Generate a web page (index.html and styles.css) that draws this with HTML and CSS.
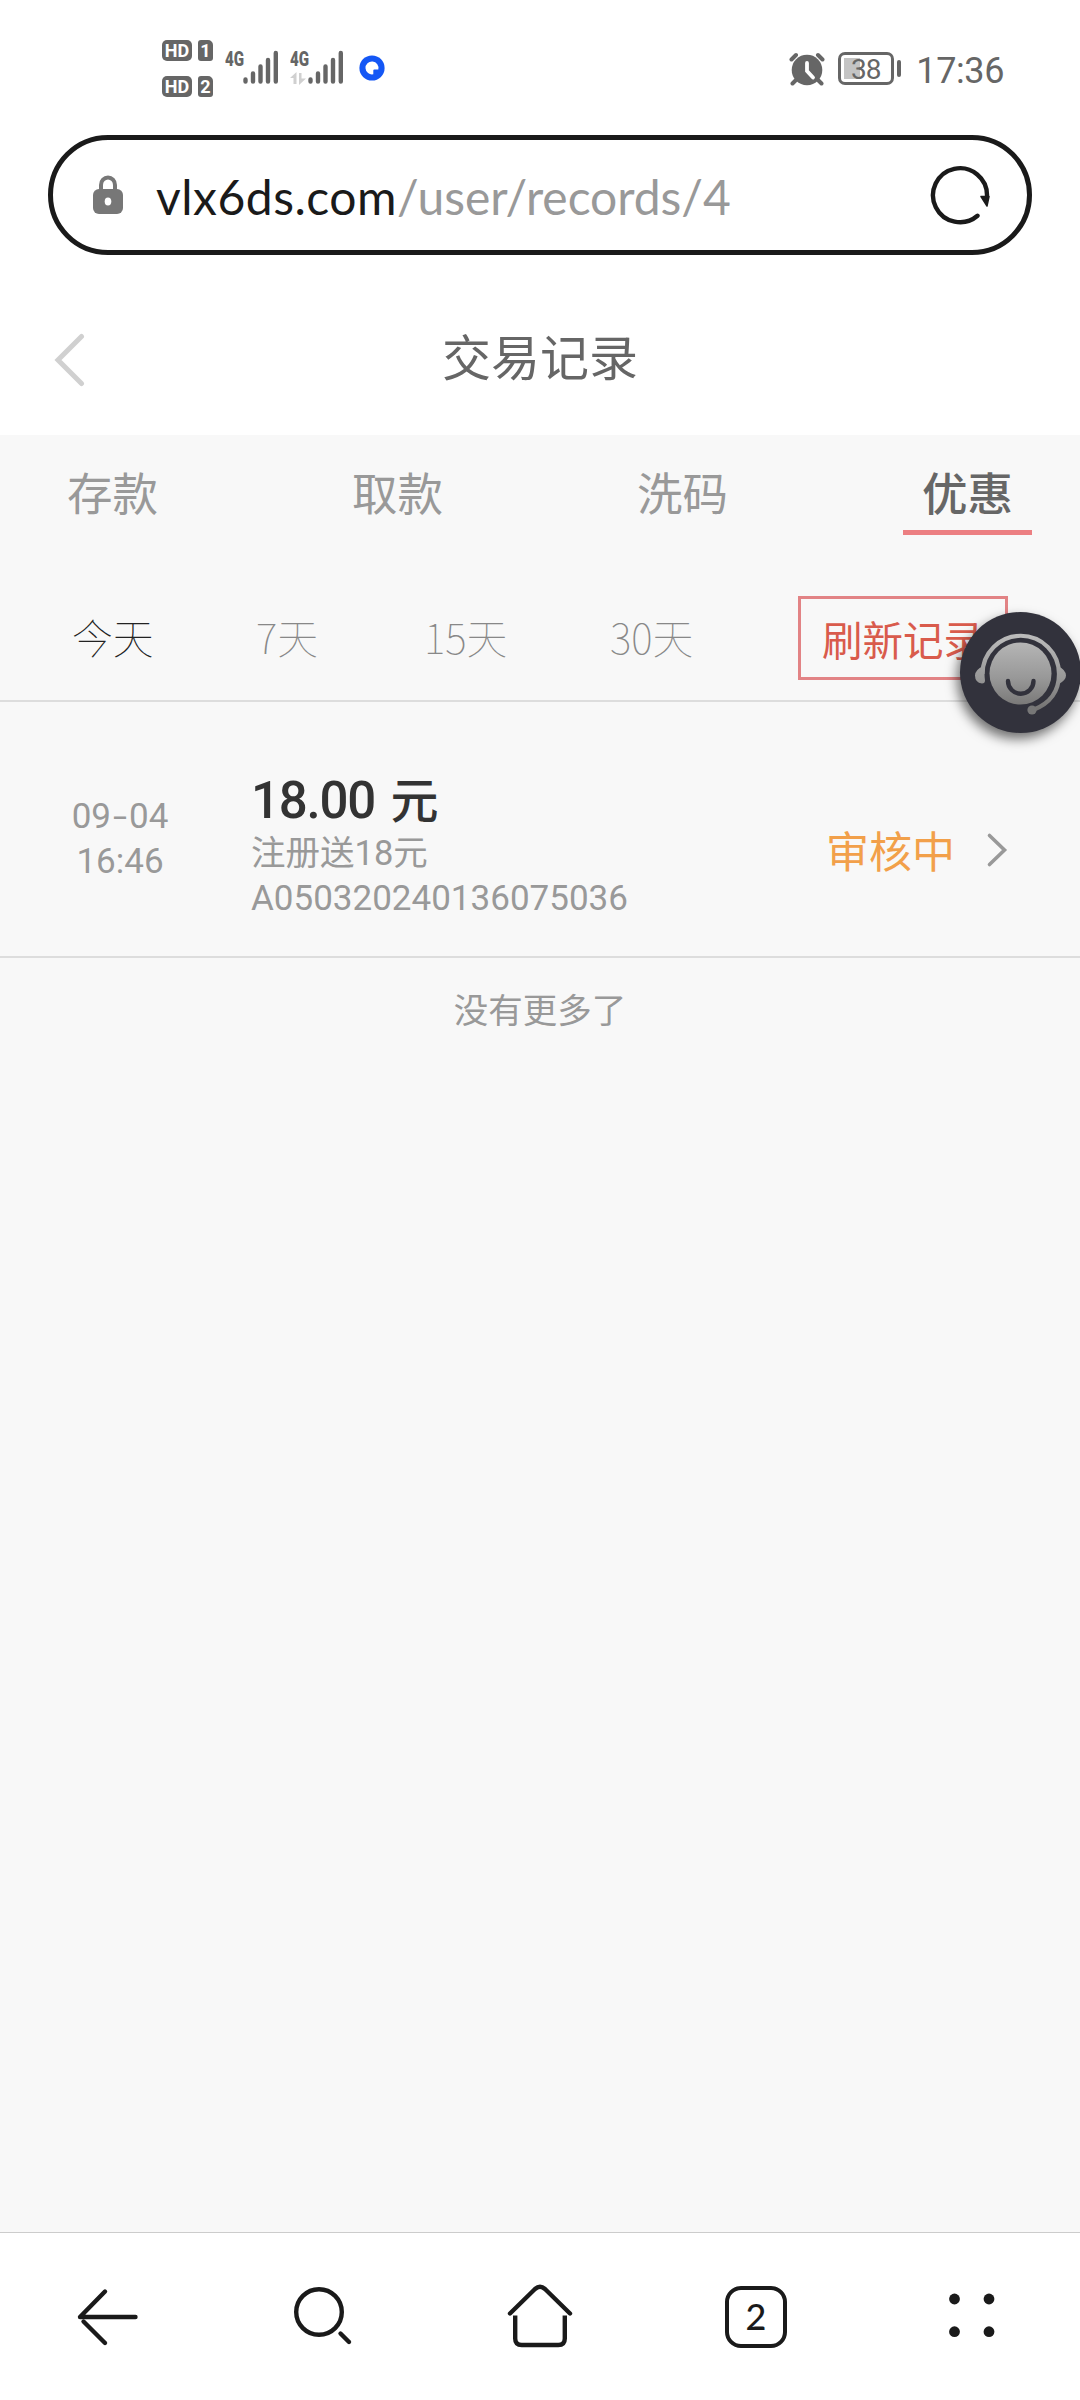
FILE: index.html
```html
<!DOCTYPE html>
<html lang="zh-CN">
<head>
<meta charset="utf-8">
<title>交易记录</title>
<link rel="stylesheet" href="styles.css">
</head>
<body>
<div class="screen">
  <div class="status">
    <div class="status-left">
      <div class="sims">
        <div class="sim"><span class="hd">HD</span><span class="slot">1</span></div>
        <div class="sim"><span class="hd">HD</span><span class="slot">2</span></div>
      </div>
      <div class="net"><span class="gen">4G</span>
        <svg class="bars" width="36" height="34" viewBox="0 0 36 34"><path d="M2.500 29.500v2M10 23.500v8M17.500 16.500v15M25 10v21.500M32.800 3v28.500" stroke="#666" stroke-width="4.400" stroke-linecap="round"/></svg>
      </div>
      <div class="net"><span class="gen">4G</span>
        <svg class="updown" width="16" height="13" viewBox="0 0 16 13"><path d="M6.500 0v12h-3V6H0zM9 1h2.500v5.500H16L9 13z" fill="#d0d0d0"/></svg>
        <svg class="bars" width="36" height="34" viewBox="0 0 36 34"><path d="M2.500 29.500v2M10 23.500v8M17.500 16.500v15M25 10v21.500M32.800 3v28.500" stroke="#666" stroke-width="4.400" stroke-linecap="round"/></svg>
      </div>
      <svg class="ring" width="26" height="26" viewBox="0 0 26 26"><circle cx="13" cy="13" r="12.600" fill="#1457f5"/><path d="M19.300 14.500A6.500 6.500 0 1 0 14.300 19.300V15.500q0-1 1-1z" fill="#fff"/></svg>
    </div>
    <div class="status-right">
      <svg width="36" height="34" viewBox="0 0 36 34"><circle cx="18" cy="18" r="15.300" fill="#666"/><path d="M2.500 7.500 7 3M33.500 7.500 29 3M7 28l-3.500 3.500M29 28l3.500 3.500" stroke="#666" stroke-width="4" stroke-linecap="round"/><path d="M18 11v8l6 6.500" fill="none" stroke="#fff" stroke-width="3.800" stroke-linecap="round"/></svg>
      <div class="battery"><span>38</span></div><i class="cap"></i>
      <span class="clock">17:36</span>
    </div>
  </div>

  <div class="address">
    <svg class="lock" width="30" height="40" viewBox="0 0 30 40"><path d="M8 16V10a7 7.500 0 0 1 14 0v6" fill="none" stroke="#777" stroke-width="4"/><rect y="14" width="30" height="25" rx="6" fill="#777"/><ellipse cx="15" cy="26.500" rx="3.300" ry="4" fill="#fff"/></svg>
    <div class="url"><span class="host">vlx6ds.com</span><span class="path">/user/records/4</span></div>
    <svg class="reload" width="60" height="60" viewBox="0 0 60 60"><path d="M47.500 50.800A27 27 0 1 1 57 31" fill="none" stroke="#1a1a1a" stroke-width="4.400" stroke-linecap="round"/><path d="M51 31.500h8l-2 9.500z" fill="#1a1a1a" stroke="#1a1a1a" stroke-width="1.500" stroke-linejoin="round"/></svg>
  </div>

  <div class="title">
    <svg class="back" width="34" height="54" viewBox="0 0 34 54"><path d="M28.500 3.500 5 27l23.500 23.500" fill="none" stroke="#d0d0d0" stroke-width="5" stroke-linecap="round"/></svg>
    <h1>交易记录</h1>
  </div>

  <main>
    <nav class="tabs"><a>存款</a><a>取款</a><a>洗码</a><a class="on">优惠</a></nav>
    <div class="filters">
      <a class="on">今天</a><a class="d7">7天</a><a class="d15">15天</a><a class="d30">30天</a>
      <button>刷新记录</button>
    </div>
    <section class="record">
      <div class="when">09<span class="dash">-</span>04<br>16:46</div>
      <div class="info"><strong>18.00 <span class="unit">元</span></strong><span>注册送18元</span><span class="serial">A050320240136075036</span></div>
      <div class="state">审核中</div>
      <svg class="go" width="22" height="36" viewBox="0 0 22 36"><path d="M3.500 3.500 18.500 18 3.500 32.500" fill="none" stroke="#999" stroke-width="3.600" stroke-linecap="round"/></svg>
    </section>
    <p class="end">没有更多了</p>
  </main>

  <nav class="bottom">
    <a><svg width="70" height="70" viewBox="0 0 70 70"><path d="M62.500 35H7L32 9.500"/><path d="M32 61 10.500 39.500"/></svg></a>
    <a><svg width="70" height="70" viewBox="0 0 70 70"><circle cx="30" cy="30" r="22.800"/><path d="m51.500 51.500 8.500 8.500"/></svg></a>
    <a><svg width="70" height="70" viewBox="0 0 70 70"><path d="M5 31.500 30 7q5-4.500 10 0L65 31.500"/><path d="M10.200 33.500v23q0 6.500 6.500 6.500h36.600q6.500 0 6.500-6.500v-23" stroke-linecap="butt"/></svg></a>
    <a><b>2</b></a>
    <a><svg width="70" height="70" viewBox="0 0 70 70"><g class="dots"><circle cx="17.500" cy="17" r="5.400"/><circle cx="52" cy="17" r="5.400"/><circle cx="17.500" cy="49.700" r="5.400"/><circle cx="52" cy="49.700" r="5.400"/></g></svg></a>
  </nav>

  <div class="service">
    <svg width="121" height="121" viewBox="0 0 121 121">
      <defs><linearGradient id="metal" gradientUnits="userSpaceOnUse" x1="0" y1="21" x2="0" y2="103"><stop offset="0" stop-color="#bdbdbd"/><stop offset=".55" stop-color="#989898"/><stop offset="1" stop-color="#6e6d6c"/></linearGradient></defs>
      <circle cx="60.500" cy="61.500" r="31" fill="url(#metal)"/>
      <path d="M48 69a12.500 12.500 0 0 0 25.500 0" fill="none" stroke="#32323c" stroke-width="4.400" stroke-linecap="round"/>
      <path d="M22.500 62a38.200 38.200 0 0 1 76.500 0q0 26-26 36" fill="none" stroke="url(#metal)" stroke-width="4.200"/>
      <path d="M23 54q-8 4-8 9.500 0 7 7 8 3 0 3-3-1-7 0-14zM98 54q8 4 8 9.500 0 5-8 9-2-9 0-18.500z" fill="url(#metal)"/>
      <circle cx="72" cy="98" r="4.600" fill="#777"/>
    </svg>
  </div>
</div>
</body>
</html>
```
FILE: styles.css
```css
* { box-sizing: border-box; }
body { margin: 0; background: #fff; font-family: Roboto, "Noto Sans CJK SC", sans-serif; color: #999; }
.screen { position: relative; width: 1080px; height: 2400px; display: flex; flex-direction: column; overflow: hidden; }
svg { display: block; flex: none; }

.status { height: 135px; display: flex; justify-content: space-between; padding: 40px 76px 0 162px; color: #666; }
.status-left { display: flex; align-items: flex-start; }
.sims { display: grid; gap: 15px; margin-right: 12px; }
.sim { display: flex; gap: 6px; }
.hd, .slot { height: 21px; background: #666; color: #fff; font: 700 18px/22px Roboto, sans-serif; text-align: center; border-radius: 5px; }
.hd { width: 30px; }
.slot { width: 15px; border-radius: 3px 5px 3px 3px; }
.net { position: relative; width: 65px; height: 45px; padding: 10px 0 0 18px; }
.gen { position: absolute; left: 0; top: 8px; font: 900 21px/22px Roboto, sans-serif; transform: scaleX(.72); transform-origin: left; }
.updown { position: absolute; left: 0; top: 32px; }
.ring { margin: 15px 0 0 4px; }
.status-right { display: flex; align-items: flex-start; padding-top: 12px; }
.battery { width: 56px; height: 33px; margin-left: 13px; border: 3px solid #666; border-radius: 7px; padding: 3px 3px 3px 2px; background: linear-gradient(#c4c4c4, #c4c4c4) 3px 3px / 16px 21px no-repeat; font-size: 28px; line-height: 23px; font-weight: 400; text-align: center; letter-spacing: -1px; }
.cap { width: 4px; height: 17px; margin: 8px 15px 0 3px; border-radius: 2px; background: #666; }
.clock { font-size: 36px; line-height: 38px; letter-spacing: -.4px; }

.address { height: 120px; margin: 0 48px; border: 5px solid #1a1a1a; border-radius: 60px; display: flex; align-items: center; padding: 0 37px 0 40px; }
.url { flex: 1; margin: 3px 0 0 33px; font: 48px/60px Lato, sans-serif; letter-spacing: .5px; white-space: nowrap; }
.host { color: #1a1a1a; }
.path { letter-spacing: -.05px; }

.title { height: 180px; padding: 0 52px 0 53px; display: flex; align-items: center; }
.title h1 { flex: 1; margin: 20px 35px 0 0; text-align: center; font: 400 49px/60px "Noto Sans CJK SC", sans-serif; color: #666; }
.back { margin-top: 29px; }

main { flex: 1; background: #f8f8f8; }
.tabs { display: flex; justify-content: space-between; padding: 0 48px; }
.tabs a { width: 129px; height: 100px; padding-top: 28px; text-align: center; font: 45.500px/56px "Noto Sans CJK SC", sans-serif; }
.tabs .on { color: #666; font-weight: 500; background: linear-gradient(#ec7f82, #ec7f82) bottom / 100% 5px no-repeat; }
.filters { height: 167px; border-bottom: 2px solid #ddd; padding: 61px 72px 0; display: flex; font: 100 40.800px/82px "Noto Sans CJK SC", sans-serif; color: #888; }
.filters .on { color: #222; width: 184px; }
.d7 { width: 168px; }
.d15 { width: 186px; }
.filters button { width: 210px; height: 84px; margin-left: auto; padding: 0; border: 3px solid #e28385; background: none; font: 400 40.500px/75px "Noto Sans CJK SC", sans-serif; color: #d95b4c; }
.record { height: 256px; border-bottom: 2px solid #ddd; padding: 69px 72px 0 71px; display: flex; font-size: 35px; line-height: 45px; }
.when { width: 180px; padding: 23px 82px 0 0; text-align: center; white-space: nowrap; }
.dash { display: inline-block; width: 18px; transform: scaleX(1.45); }
.info { flex: 1; display: grid; align-content: start; font-size: 34.500px; }
.info strong { font-size: 51px; line-height: 60px; font-weight: 500; color: #333; letter-spacing: -1.200px; }
.info .unit { font-size: 48px; line-height: 1; margin-left: 4px; }
.info .serial { font-size: 35px; }
.state { margin-top: 48px; font: 43px/60px "Noto Sans CJK SC", sans-serif; color: #f2a04a; }
.go { margin: 61px 0 0 31px; }
.end { margin: 0; padding-top: 25px; text-align: center; font: 34.500px/50px "Noto Sans CJK SC", sans-serif; }

.bottom { height: 168px; border-top: 1px solid #ccc; background: #fff; display: grid; grid-template-columns: repeat(5, 1fr); justify-items: center; padding-top: 49px; }
.bottom svg { fill: none; stroke: #1a1a1a; stroke-width: 4.400px; stroke-linecap: round; stroke-linejoin: round; }
.bottom .dots { fill: #1a1a1a; stroke: none; }
.bottom b { display: block; width: 62px; height: 62px; margin-top: 4px; border: 4.500px solid #1a1a1a; border-radius: 16px; font: 500 36px/52px Lato, sans-serif; text-align: center; color: #1a1a1a; }

.service { position: absolute; left: 960px; top: 612px; width: 121px; height: 121px; border-radius: 50%; background: #32323c; box-shadow: -3px 6px 12px rgba(0, 0, 0, .55); }
```
